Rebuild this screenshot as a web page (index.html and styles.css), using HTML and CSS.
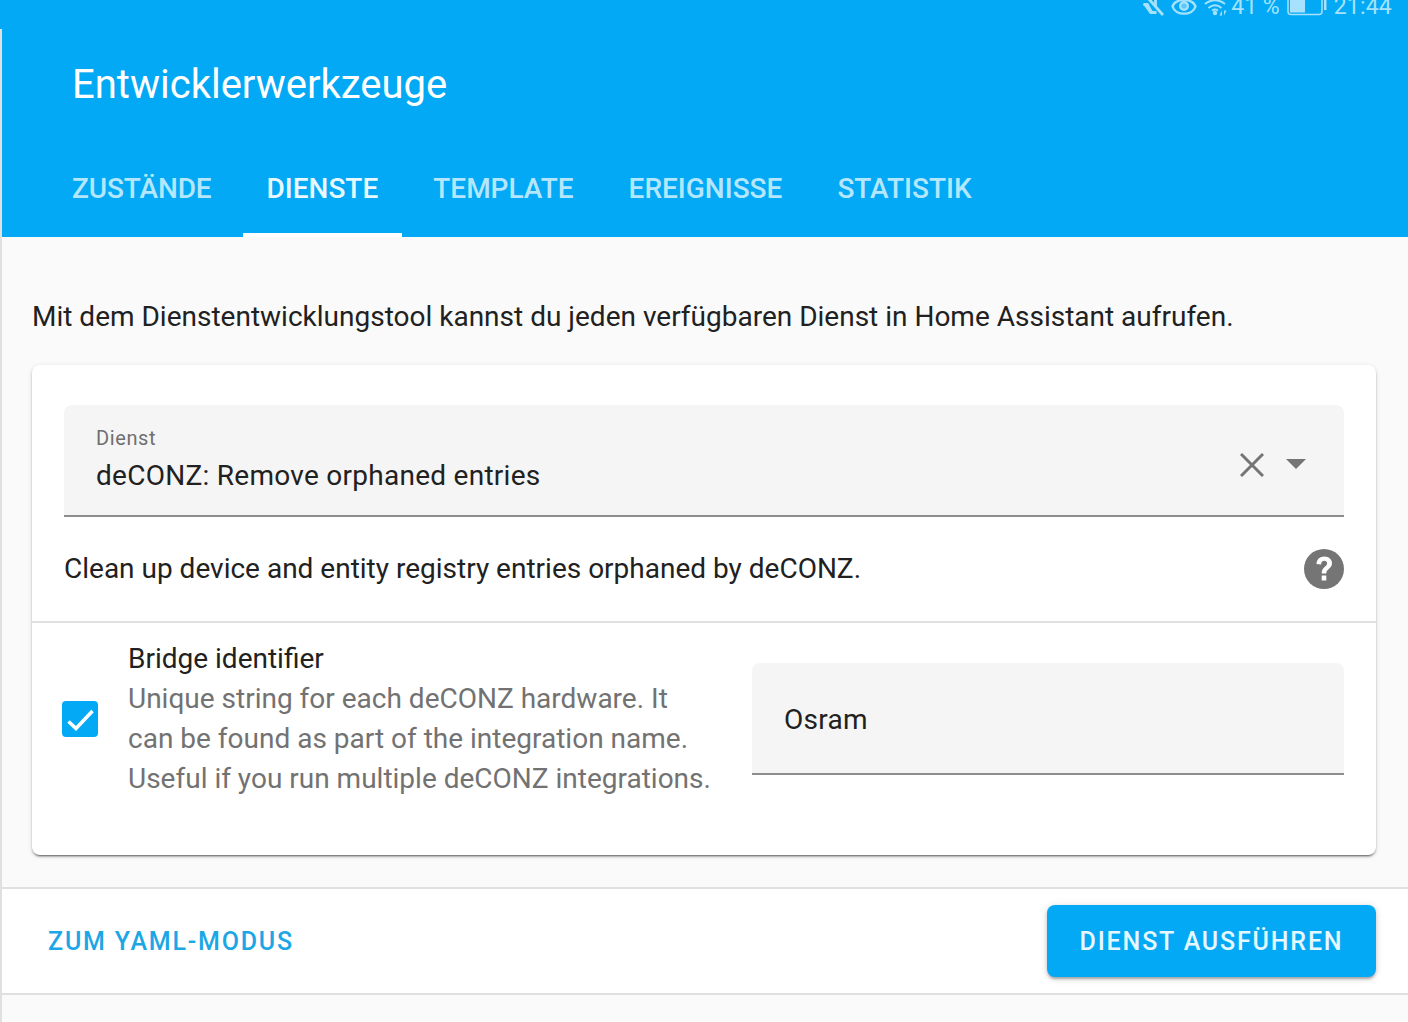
FILE: index.html
```html
<!DOCTYPE html>
<html lang="de">
<head>
<meta charset="utf-8">
<title>Entwicklerwerkzeuge</title>
<link rel="stylesheet" href="styles.css">
</head>
<body>
<div class="statusbar">
  <svg class="st-icon mute" viewBox="0 0 22 20"><path d="M1.500 4.500h4L9 12.500h5.500" fill="none" stroke="currentColor" stroke-width="2.800" stroke-linejoin="round"/><path d="M1 4l7 10 4-1-6-9z" fill="currentColor"/><path d="M13.500 -1v7" fill="none" stroke="currentColor" stroke-width="2.800"/><path d="M6 -2L21 15" fill="none" stroke="currentColor" stroke-width="2.800"/></svg>
  <svg class="st-icon eye" viewBox="0 0 26 20"><path d="M1.500 6.500C4.500 -2 21.500 -2 24.500 6.500 21.500 16 4.500 16 1.500 6.500z" fill="none" stroke="currentColor" stroke-width="2.400"/><circle cx="13" cy="6" r="3.800" fill="currentColor" fill-opacity=".55" stroke="currentColor" stroke-width="2.400"/></svg>
  <svg class="st-icon wifi" viewBox="0 0 26 20"><path d="M1 4c6-5 14-5 20 0M4.500 8c4-3.300 9-3.300 13 0" fill="none" stroke="currentColor" stroke-width="2"/><path d="M8 10.500c2-1.300 4-1.300 6 0" fill="none" stroke="currentColor" stroke-width="1.800"/><circle cx="11" cy="13" r="2.200" fill="currentColor"/><path d="M18 15.500v-5l-2.500 5zM20 10.500v5l2.500-5z" fill="currentColor"/></svg>
  <span class="st-text pct">41 %</span>
  <svg class="st-icon battery" viewBox="0 0 40 20"><rect x="1" y="-4" width="34" height="18.500" rx="3" fill="none" stroke="currentColor" stroke-width="1.500"/><rect x="3" y="-3" width="15" height="15.500" fill="currentColor"/><rect x="37" y="0" width="2.500" height="10" fill="currentColor"/></svg>
  <span class="st-text time">21:44</span>
</div>
<div class="app">
  <header class="header">
    <h1 class="title">Entwicklerwerkzeuge</h1>
    <nav class="tabs">
      <a class="tab">ZUSTÄNDE</a>
      <a class="tab active">DIENSTE</a>
      <a class="tab">TEMPLATE</a>
      <a class="tab">EREIGNISSE</a>
      <a class="tab">STATISTIK</a>
    </nav>
  </header>
  <main class="content">
    <p class="intro">Mit dem Dienstentwicklungstool kannst du jeden verfügbaren Dienst in Home Assistant aufrufen.</p>
    <section class="card">
      <div class="service">
        <div class="field select">
          <div class="select-text">
            <span class="label">Dienst</span>
            <span class="value">deCONZ: Remove orphaned entries</span>
          </div>
          <svg class="clear" viewBox="0 0 24 24"><path d="M1 1l22 22M23 1L1 23" fill="none" stroke="#757575" stroke-width="3"/></svg>
          <svg class="caret" viewBox="0 0 20 10"><path d="M0 0h20L10 10z" fill="#757575"/></svg>
        </div>
        <div class="desc">
          <span>Clean up device and entity registry entries orphaned by deCONZ.</span>
          <svg class="help" viewBox="0 0 40 40"><circle cx="20" cy="20" r="20" fill="#757575"/><path d="M12.500 15c0-4.500 3.300-7.500 7.800-7.500 4.600 0 7.700 2.800 7.700 6.800 0 3-1.700 4.400-3.500 5.900-1.500 1.200-2.200 2.200-2.200 4.300h-4.600c0-3.300 1-4.800 2.900-6.500 1.500-1.300 2.500-2.100 2.500-3.500 0-1.700-1.100-2.700-2.800-2.700-1.900 0-3.100 1.300-3.200 3.700z" fill="#fff"/><rect x="17.700" y="26.500" width="4.600" height="5" fill="#fff"/></svg>
        </div>
      </div>
      <div class="param">
        <span class="checkbox"><svg viewBox="0 0 36 36"><path d="M6.500 20.500l7.500 7L30.500 10" fill="none" stroke="#fff" stroke-width="3.600"/></svg></span>
        <div class="param-text">
          <div class="param-name">Bridge identifier</div>
          <div class="param-help">Unique string for each deCONZ hardware. It can be found as part of the integration name. Useful if you run multiple deCONZ integrations.</div>
        </div>
        <div class="field input">Osram</div>
      </div>
    </section>
  </main>
  <footer class="footer">
    <a class="yaml">ZUM YAML-MODUS</a>
    <button class="run">DIENST AUSFÜHREN</button>
  </footer>
</div>
</body>
</html>
```
FILE: styles.css
```css
* { box-sizing: border-box; }
html, body { margin: 0; height: 1022px; overflow: hidden; }
body { font-family: Roboto, sans-serif; background: #03a9f4; color: #212121; }
.statusbar { height: 29px; background: #03a9f4; color: #a6e2fd; display: flex; justify-content: flex-end; align-items: flex-start; padding-right: 16px; overflow: hidden; }
.st-icon { display: block; flex: none; }
.mute { width: 22px; height: 20px; margin-right: 7px; }
.eye { width: 26px; height: 20px; margin-right: 7px; }
.wifi { width: 26px; height: 20px; margin-right: 1px; }
.st-text { font-size: 23px; line-height: 28px; margin-top: -7px; }
.pct { margin-right: 7px; }
.time { letter-spacing: .2px; }
.battery { width: 40px; height: 20px; margin-right: 7px; }
.app { height: 993px; background: #fafafa; border-left: 2px solid #e0e0e0; display: flex; flex-direction: column; }
.header { height: 208px; background: #03a9f4; color: #fff; padding-left: 46px; flex: none; }
.title { margin: 0; padding: 33px 0 0 24px; height: 119px; font-size: 40px; line-height: 46px; font-weight: 400; }
.tabs { display: flex; height: 89px; gap: 7px; }
.tab { padding: 0 24px; height: 89px; line-height: 81px; font-size: 28px; font-weight: 500; color: #b4e7fe; border-bottom: 4px solid transparent; }
.tab:first-child { letter-spacing: -.12px; }
.tab.active { color: #e9f8ff; border-bottom-color: #fff; }
.content { padding: 0 32px 0 30px; height: 650px; flex: none; }
.intro { margin: 0; padding-top: 63px; height: 128px; font-size: 28px; line-height: 34px; }
.card { height: 490px; background: #fff; border-radius: 8px; box-shadow: 0 2px 2px rgba(0,0,0,.24), 0 1px 5px rgba(0,0,0,.12), 0 3px 1px -2px rgba(0,0,0,.3); }
.service { height: 258px; padding: 40px 32px 0; border-bottom: 2px solid #e0e0e0; }
.field { background: #f5f5f5; border-radius: 8px 8px 0 0; border-bottom: 2px solid #8c8c8c; }
.select { height: 112px; padding: 0 38px 0 32px; display: flex; align-items: flex-start; }
.select-text { flex: 1; display: flex; flex-direction: column; padding-top: 21px; }
.label { font-size: 20px; line-height: 24px; letter-spacing: .6px; color: #6f6f6f; }
.value { font-size: 28px; line-height: 34px; margin-top: 9px; letter-spacing: .27px; }
.clear { width: 24px; height: 24px; margin-top: 48px; margin-right: 22px; }
.caret { width: 20px; height: 10px; margin-top: 54px; }
.desc { height: 104px; display: flex; justify-content: space-between; align-items: center; font-size: 28px; }
.desc span { margin-bottom: 2px; }
.help { width: 40px; height: 40px; }
.param { height: 232px; display: flex; align-items: flex-start; padding: 16px 32px 0 30px; }
.checkbox { width: 36px; height: 36px; background: #03a9f4; border-radius: 4px; margin-top: 62px; flex: none; }
.checkbox svg { display: block; }
.param-text { width: 586px; margin-left: 30px; flex: none; font-size: 28px; line-height: 40px; }
.param-name { color: #212121; }
.param-help { color: #727272; }
.input { width: 592px; height: 112px; margin-top: 24px; margin-left: auto; flex: none; padding: 0 32px; font-size: 28px; line-height: 114px; letter-spacing: .25px; }
.footer { height: 108px; flex: none; background: #fff; border-top: 2px solid #e0e0e0; border-bottom: 2px solid #e0e0e0; display: flex; justify-content: space-between; align-items: center; padding: 0 32px 1px 46px; }
.yaml { font-size: 25px; font-weight: 500; letter-spacing: 1.8px; color: #1ba6e6; padding-top: 2px; }
.run { width: 329px; height: 72px; border: 0; border-radius: 8px; padding: 2px 0 0; background: #03a9f4; color: #e6f8ff; font-family: Roboto, sans-serif; font-size: 25px; font-weight: 500; letter-spacing: 1.83px; box-shadow: 0 3px 2px -1px rgba(0,0,0,.2), 0 2px 4px rgba(0,0,0,.14), 0 1px 8px rgba(0,0,0,.12); }
```
